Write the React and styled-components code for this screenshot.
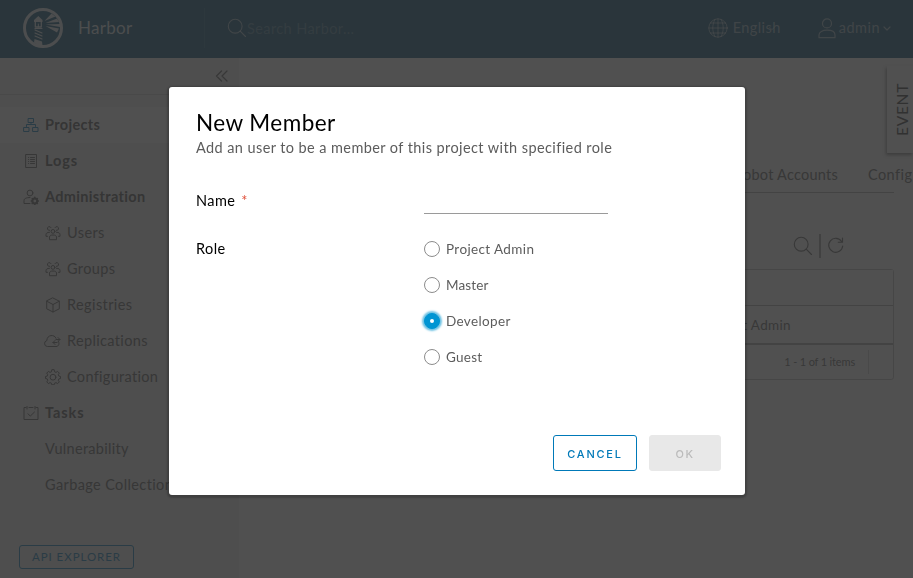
import React from 'react';
import styled, { createGlobalStyle } from 'styled-components';

const GlobalStyle = createGlobalStyle`
  * { box-sizing: border-box; }
  body { margin: 0; overflow: hidden; font: 14.5px/24px Lato, "Open Sans", sans-serif; color: #5c5c5c; }
  button { font-family: inherit; }
`;
const Page = styled.div`height: 578px; display: flex; flex-direction: column; overflow: hidden; background: #fafafa;`;
const Header = styled.header`height: 58px; padding-bottom: 2px; flex: none; display: flex; align-items: center; background: #004a70; color: #fff;`;
const Brand = styled.div`width: 205px; height: 40px; padding-left: 23px; display: flex; align-items: center; gap: 15px; border-right: 1px solid rgba(255,255,255,.1); font-size: 17px; letter-spacing: .3px; color: rgba(255,255,255,.88);`;
const Search = styled.div`flex: 1; padding: 2px 0 0 22px; display: flex; align-items: center; letter-spacing: .4px; color: rgba(255,255,255,.28); svg { margin-top: -2px; color: rgba(255,255,255,.6); }`;
const HeaderMenu = styled.div`display: flex; align-items: center; gap: ${p => p.$gap}px; letter-spacing: ${p => p.$ls}px; color: rgba(255,255,255,.58); margin-right: ${p => p.$right}px;`;
const LanguageCaret = styled.span`display: flex; margin-left: -17px; width: 8px;`;
const Body = styled.div`flex: 1; min-height: 0; display: flex;`;
const Sidebar = styled.aside`width: 239px; flex: none; display: flex; flex-direction: column; background: #eee;`;
const Collapse = styled.div`height: 37px; flex: none; padding: 0 11px 1px 0; display: flex; align-items: center; justify-content: flex-end; border-bottom: 1px solid #ccc;`;
const Nav = styled.nav`padding-top: 12px;`;
const NavItem = styled.div`
  height: 36px; display: flex; align-items: center; gap: 6px;
  padding-left: ${p => p.$indent}px; background: ${p => (p.$active ? '#fff' : 'none')};
  font-weight: ${p => (p.$bold ? 700 : 400)}; letter-spacing: ${p => p.$ls}px;
  color: ${p => (p.$bold ? '#4a4a4a' : '#565656')}; white-space: nowrap;
  svg { flex: none; color: ${p => (p.$active ? '#0079b8' : '#565656')}; }
`;
const ApiButton = styled.button`margin: 42px 0 0 19px; width: 115px; height: 24px; padding: 0; border: 1px solid #0079b8; border-radius: 3px; background: none; color: #0079b8; font-size: 11.5px; letter-spacing: .95px; line-height: 22px;`;
const Main = styled.main`flex: 1; min-width: 0; padding: 99px 0 0 24px; overflow: hidden;`;
const Tabs = styled.div`width: 631px; height: 36px; display: flex; align-items: center; justify-content: flex-end; gap: 30px; border-bottom: 1px solid #aaa; white-space: nowrap; letter-spacing: .24px;`;
const LastTab = styled.span`width: 44px; margin-right: -18px; letter-spacing: .42px;`;
const Tools = styled.div`width: 631px; height: 76px; padding: 41px 49px 0 0; display: flex; justify-content: flex-end; align-items: flex-start; gap: 6px; svg { margin-top: 2px; }`;
const ToolDivider = styled.span`width: 2px; height: 24px; background: #999;`;
const Grid = styled.div`width: 631px; height: 111px; border: 1px solid #bbb; border-radius: 3px; display: grid; grid-template-rows: 36px 39px 1fr; background: #fff;`;
const GridHead = styled.div`border-bottom: 1px solid #aaa; background: #fafafa;`;
const GridRow = styled.div`padding: 0 102px 0 0; display: flex; align-items: center; justify-content: flex-end; border-bottom: 2px solid #aaa; font-size: 13.5px; letter-spacing: .35px;`;
const GridFoot = styled.div`display: flex; align-items: center; justify-content: flex-end; font-size: 11px; letter-spacing: -.16px;`;
const FootDivider = styled.span`height: 24px; margin: 0 24px 0 13px; border-left: 1px solid #ccc;`;
const EventTab = styled.div`position: absolute; right: 0; top: 66px; width: 26px; height: 87px; display: flex; align-items: center; justify-content: center; background: #fafafa; box-shadow: -1px 2px 3px rgba(0,0,0,.5);`;
const EventText = styled.span`writing-mode: vertical-rl; transform: rotate(180deg); font-size: 15.5px; letter-spacing: .7px; line-height: 26px; padding-right: 1px; margin-left: 3px; color: #313131;`;
const Backdrop = styled.div`position: fixed; inset: 0; display: flex; justify-content: center; align-items: flex-start; padding: 87px 0 0 1px; background: rgba(49,49,49,.85);`;
const Dialog = styled.section`width: 576px; height: 408px; padding: 21px 24px 24px 27px; display: flex; flex-direction: column; background: #fff; border-radius: 3px; box-shadow: 0 1px 2px 2px rgba(0,0,0,.2);`;
const Title = styled.h3`margin: 0; font-size: 22.5px; line-height: 29px; font-weight: 400; letter-spacing: .45px; color: #000;`;
const Intro = styled.p`margin: 0; line-height: 21px; letter-spacing: .41px;`;
const Field = styled.div`display: grid; grid-template-columns: 228px 1fr; margin-top: ${p => p.$top}px;`;
const Label = styled.label`color: #000; letter-spacing: .42px; line-height: ${p => (p.$raised ? 22 : 24)}px;`;
const Required = styled.span`color: #e0503a; margin-left: 6px;`;
const NameInput = styled.input`width: 184px; height: 24px; border: 0; border-bottom: 1px solid #9a9a9a; border-radius: 0; outline: 0; background: none;`;
const Options = styled.div`display: grid; grid-auto-rows: 36px;`;
const Option = styled.label`height: 24px; display: flex; align-items: center; gap: 6px; font-size: 13.5px; line-height: 23px; letter-spacing: ${p => p.$ls}px;`;
const Radio = styled.i`
  width: 16px; height: 16px; border-radius: 50%; display: grid; place-items: center;
  border: 1px solid ${p => (p.$on ? '#0095d3' : '#8c8c8c')}; background: ${p => (p.$on ? '#0095d3' : '#fff')};
  box-shadow: ${p => (p.$on ? '0 0 2px 2px #6bc1e3' : 'none')};
  &::after { content: ''; width: 4px; height: 4px; border-radius: 50%; background: #fff; }
`;
const Actions = styled.footer`margin-top: auto; display: flex; justify-content: flex-end; gap: 12px;`;
const Action = styled.button`
  width: ${p => (p.disabled ? 72 : 84)}px; height: 36px; padding: 2px 0 0; border-radius: 3px;
  border: 1px solid ${p => (p.disabled ? '#e8e8e8' : '#0079b8')}; background: ${p => (p.disabled ? '#e8e8e8' : '#fff')};
  color: ${p => (p.disabled ? '#bbb' : '#0079b8')}; font: 500 11px Inter, sans-serif; letter-spacing: ${p => (p.disabled ? 1.6 : 1.8)}px;
`;

const Svg = ({ w = 16, h = w, box = '0 0 16 16', sw = 1, children }) => (
  <svg width={w} height={h} viewBox={box} fill="none" stroke="currentColor" strokeWidth={sw} strokeLinecap="round" strokeLinejoin="round">{children}</svg>
);
const Logo = () => (
  <Svg w={40} box="0 0 40 40">
    <circle cx="20" cy="20" r="18.5" strokeWidth="3" />
    <path d="M11 14v-2l4.3-4 4.2 4v2Z" fill="currentColor" stroke="none" />
    <path d="M12.3 14v5h6v-5" strokeWidth="1.3" />
    <path d="M15.3 16v3" strokeWidth="1" />
    <path d="m12 22 7 3M12 25l7 3M12 28l7 3M12 20.5h7" strokeWidth="1.2" />
    <path d="M11.5 31l7.5 2.5.5 4c-3 0-6-1-8.5-3Z" fill="currentColor" stroke="none" />
    <path d="m21.5 13 7-7.5 4 3ZM22.5 15l11.5-4.5 2 3.5ZM22.5 16.5l14.5-.5v3ZM22.5 18l13.5 2.5-2 4Z" fill="currentColor" stroke="none" />
  </Svg>
);
const SearchIcon = () => <Svg w={20} box="0 0 20 20" sw={1.1}><circle cx="8.2" cy="8.2" r="6.9" /><path d="m13.2 13.2 5.3 5.3" /></Svg>;
const Globe = () => <Svg w={20} box="0 0 20 20" sw={.9}><circle cx="10" cy="10" r="9.2" /><path d="M10 .8v18.4M.8 10h18.4M2.3 5h15.4M2.3 15h15.4M7 1.5c-3 5-3 12 0 17M13 1.5c3 5 3 12 0 17" /></Svg>;
const Person = () => <Svg w={18} h={21} box="0 0 18 21" sw={1.2}><circle cx="9" cy="5.4" r="4.5" /><path d="M1 19.7v-2.8c0-3 3.5-4.7 8-4.7s8 1.7 8 4.7v2.8Z" /></Svg>;
const Caret = ({ w = 8 }) => <Svg w={w} h={5} box="0 0 8 5" sw={1.2}><path d="m1 1 3 3 3-3" /></Svg>;
const Projects = () => <Svg><path d="M5.5 1.5h5v4h-5ZM1 10.5h5v4H1ZM10 10.5h5v4h-5ZM8 5.5v2M3.5 9.5v-2h9v2" /></Svg>;
const Logs = () => <Svg><path d="M3 1.5h10.5v13H3ZM5.5 4.5h.2M7.5 4.5h4M5.5 6.5h.2M7.5 6.5h4M5.5 8.5h.2M7.5 8.5h4M5.5 10.5h.2M7.5 10.5h4" /></Svg>;
const Admin = () => <Svg><circle cx="7" cy="4" r="2.9" /><path d="M7 14.5H1v-3C1 9.5 3.5 8.5 7 8.5" /><circle cx="11.8" cy="12" r="2.4" strokeWidth="2" /><path d="M11.8 8.4v1M11.8 14.6v1M8.3 12h1M14.4 12h1M9.3 9.5l.7.7M13.7 13.8l.6.6M14.3 9.5l-.7.7M9.9 13.8l-.6.6" strokeWidth="1.6" /></Svg>;
const Users = () => <Svg><circle cx="8" cy="6.4" r="1.9" /><path d="M4.5 14.3v-2.2c0-1.6 1.5-2.1 3.5-2.1s3.5.5 3.5 2.1v2.2ZM4.6 5.4A1.9 1.9 0 1 1 6 2.6M11.4 5.4A1.9 1.9 0 1 0 10 2.6M4.5 7.3C2 7.3 1 8.3 1 9.6v1.7h1.5M11.5 7.3c2.5 0 3.5 1 3.5 2.3v1.7h-1.5" /></Svg>;
const Box = () => <Svg><path d="m8 1 6.3 3.2v7.6L8 15l-6.3-3.2V4.2ZM1.7 4.2 8 7.5l6.3-3.3M8 7.5V15" /></Svg>;
const Cloud = () => <Svg w={17} h={16} box="0 0 17 16"><path d="M12.5 13.5h-9a3 3 0 0 1-.7-5.9C3 1.5 10.5 1 12 5.2M14.3 8c1.5 2.5.5 5.5-1.8 5.5M16 6.5h-4m2-2 2 2-2 2M9 9.5h4M11 7.5l-2 2 2 2" /></Svg>;
const Gear = () => <Svg><path d="m6.8 1-.4 1.8-1.4.6-1.6-1-1.7 1.7 1 1.6-.5 1.4-1.7.4v2l1.7.4.6 1.4-1 1.6 1.6 1.7 1.6-1 1.4.6.4 1.6h2.4l.4-1.6 1.4-.6 1.6 1 1.7-1.7-1-1.6.6-1.4 1.6-.4v-2l-1.6-.4-.6-1.4 1-1.6-1.7-1.7-1.6 1-1.4-.6L9.2 1Z" /><circle cx="8" cy="8.2" r="2.9" /></Svg>;
const Tasks = () => <Svg><path d="M3 2.5H1v12h14v-12h-2M6 2.5h4M4 1.5V4M12 1.5V4M5 8.8l2.3 2.3L11.5 7" /></Svg>;
const Refresh = () => <Svg w={18} box="0 0 18 18" sw={1.1}><path d="M14.6 5.5A7 7 0 1 0 15.7 10M15.5 2v4.2h-4.2" /></Svg>;

const links = [
  ['Projects', Projects, 23, .34, true], ['Logs', Logs, 23, .9, true], ['Administration', Admin, 23, .34, true],
  ['Users', Users, 45, .4], ['Groups', Users, 45, .36], ['Registries', Box, 45, .4],
  ['Replications', Cloud, 44, .35], ['Configuration', Gear, 45, .31], ['Tasks', Tasks, 23, .9, true],
  ['Vulnerability', null, 45, .31], ['Garbage Collection', null, 45, .38],
];
const roles = [['Project Admin', .38], ['Master', .16], ['Developer', .36], ['Guest', .26]];

export default function App() {
  return (
    <>
      <GlobalStyle />
      <Page>
        <Header>
          <Brand><Logo />Harbor</Brand>
          <Search><SearchIcon />Search Harbor...</Search>
          <HeaderMenu $gap={5} $ls={.4} $right={41}><Globe />English<LanguageCaret><Caret w={6} /></LanguageCaret></HeaderMenu>
          <HeaderMenu $gap={3} $ls={.5} $right={22}><Person />admin<Caret /></HeaderMenu>
        </Header>
        <Body>
          <Sidebar>
            <Collapse><Svg w={13} h={12} box="0 0 13 12" sw={1.2}><path d="M6.5 1 1.5 6l5 5M12 1 7 6l5 5" /></Svg></Collapse>
            <Nav>
              {links.map(([name, Icon, indent, ls, bold]) => (
                <NavItem key={name} $indent={indent} $ls={ls} $bold={bold} $active={name === 'Projects'}>{Icon && <Icon />}{name}</NavItem>
              ))}
            </Nav>
            <ApiButton>API EXPLORER</ApiButton>
          </Sidebar>
          <Main>
            <Tabs><span>Robot Accounts</span><LastTab>Config</LastTab></Tabs>
            <Tools><SearchIcon /><ToolDivider /><Refresh /></Tools>
            <Grid>
              <GridHead />
              <GridRow>Project Admin</GridRow>
              <GridFoot>1 - 1 of 1 items<FootDivider /></GridFoot>
            </Grid>
          </Main>
        </Body>
      </Page>
      <EventTab><EventText>EVENT</EventText></EventTab>
      <Backdrop>
        <Dialog>
          <Title>New Member</Title>
          <Intro>Add an user to be a member of this project with specified role</Intro>
          <Field $top={32}>
            <Label $raised>Name<Required>*</Required></Label>
            <NameInput />
          </Field>
          <Field $top={23}>
            <Label>Role</Label>
            <Options>
              {roles.map(([role, ls]) => <Option key={role} $ls={ls}><Radio $on={role === 'Developer'} /><span>{role}</span></Option>)}
            </Options>
          </Field>
          <Actions><Action>CANCEL</Action><Action disabled>OK</Action></Actions>
        </Dialog>
      </Backdrop>
    </>
  );
}
